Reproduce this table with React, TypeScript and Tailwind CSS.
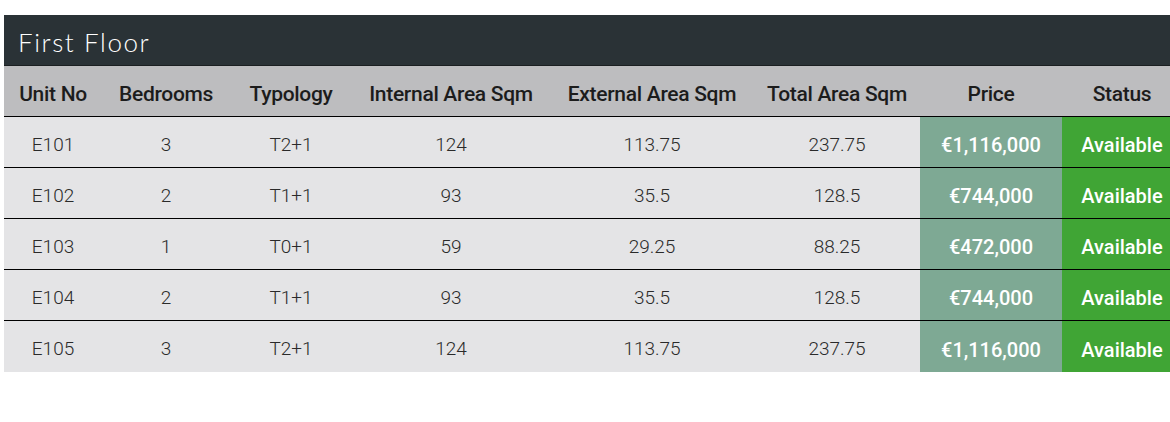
const cols = [
  { label: "Unit No", w: "w-[98px]" },
  { label: "Bedrooms", w: "w-[128px]" },
  { label: "Typology", w: "w-[122px]" },
  { label: "Internal Area Sqm", w: "w-[198px]" },
  { label: "External Area Sqm", w: "w-[204px]" },
  { label: "Total Area Sqm", w: "w-[166px]" },
  { label: "Price", w: "w-[142px]" },
  { label: "Status", w: "w-[120px]" },
];

const units = [
  ["E101", "3", "T2+1", "124", "113.75", "237.75", "€1,116,000"],
  ["E102", "2", "T1+1", "93", "35.5", "128.5", "€744,000"],
  ["E103", "1", "T0+1", "59", "29.25", "88.25", "€472,000"],
  ["E104", "2", "T1+1", "93", "35.5", "128.5", "€744,000"],
  ["E105", "3", "T2+1", "124", "113.75", "237.75", "€1,116,000"],
];

export default function App() {
  return (
    <div className="w-[1170px] h-[422px] overflow-hidden bg-white pt-[15px] pl-[4px] font-['Roboto',sans-serif]">
      <div className="w-[1180px]">
        <div className="h-[51px] bg-[#2a3236] border-b border-[#1b1f21] flex items-center pl-[14px]">
          <span className="font-['Lato',sans-serif] font-light text-[26px] tracking-[1.6px] text-white mt-[4px]">
            First Floor
          </span>
        </div>
        <div className="flex h-[51px] bg-[#bdbdbf] border-b border-black">
          {cols.map((c) => (
            <div key={c.label} className={`${c.w} flex items-center justify-center text-[21px] font-medium text-[#1c1c1c] tracking-[-0.3px] pt-[7px] whitespace-nowrap`}>
              {c.label}
            </div>
          ))}
        </div>
        {units.map((u, i) => (
          <div key={u[0]} className={`flex h-[51px] bg-[#e4e4e6] ${i < units.length - 1 ? "border-b border-black" : ""}`}>
            {u.slice(0, 6).map((v, j) => (
              <div key={j} className={`${cols[j].w} flex items-center justify-center text-[19px] font-light text-[#2a2a2a] pt-[6px]`}>
                {v}
              </div>
            ))}
            <div className="w-[142px] bg-[#7ea994] flex items-center justify-center text-[20px] font-medium text-white pt-[6px]">
              {u[6]}
            </div>
            <div className="w-[120px] bg-[#40a535] flex items-center justify-center text-[20px] font-medium text-white pt-[6px]">
              Available
            </div>
          </div>
        ))}
      </div>
    </div>
  );
}
